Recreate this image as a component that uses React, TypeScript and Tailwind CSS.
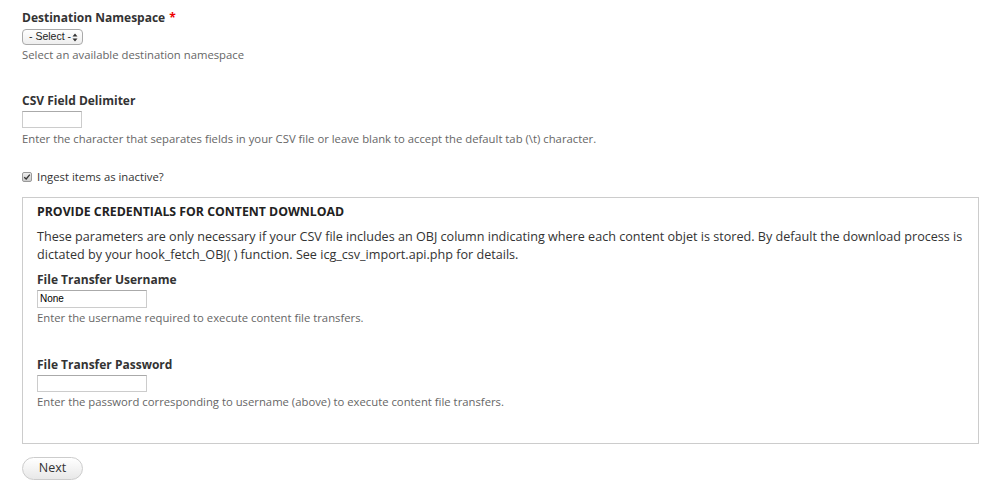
import React from "react";

const font = "font-['Open_Sans','Lucida_Grande',sans-serif]";

function Label({ children, required }: { children: React.ReactNode; required?: boolean }) {
  return (
    <div className="text-[12px] font-bold leading-[16px] text-[#333]">
      {children}
      {required && <span className="ml-1 text-[#e00]">*</span>}
    </div>
  );
}

function Help({ children }: { children: React.ReactNode }) {
  return <div className="text-[11.3px] leading-[14px] text-[#666]">{children}</div>;
}

export default function App() {
  return (
    <div className={`${font} bg-white w-[1000px] h-[495px] px-[22px] pt-[10px] text-[#333]`}>
      {/* destination namespace */}
      <div>
        <Label required>Destination Namespace</Label>
        <div className="mt-[3px] flex h-[16px] w-[61px] items-center justify-between rounded-[4px] border border-[#aaa] bg-gradient-to-b from-white to-[#eee] pl-[6px] pr-[4px] text-[10.5px] text-[#222] font-['Liberation_Sans',sans-serif]">
          <span>- Select -</span>
          <svg viewBox="0 0 6 9" className="h-[9px] w-[6px]">
            <path d="M0.5 3.6 L3 0.6 L5.5 3.6 Z M0.5 5.4 L3 8.4 L5.5 5.4 Z" fill="#333" />
          </svg>
        </div>
        <div className="mt-[3px]">
          <Help>Select an available destination namespace</Help>
        </div>
      </div>

      {/* csv delimiter */}
      <div className="mt-[31px]">
        <Label>CSV Field Delimiter</Label>
        <div className="mt-[2px] h-[17px] w-[60px] border border-[#ccc] border-t-[#aaa] bg-white" />
        <div className="mt-[4px]">
          <Help>Enter the character that separates fields in your CSV file or leave blank to accept the default tab (\t) character.</Help>
        </div>
      </div>

      {/* inactive checkbox */}
      <label className="mt-[23px] flex items-center gap-[5px] text-[11.3px] text-[#333]">
        <span className="flex h-[10px] w-[10px] items-center justify-center rounded-[2px] border border-[#999] bg-gradient-to-b from-[#eee] to-[#ccc]">
          <svg viewBox="0 0 10 10" className="h-[8px] w-[8px]">
            <path d="M1.5 5.2 L4 7.5 L8.5 2" fill="none" stroke="#333" strokeWidth="1.6" />
          </svg>
        </span>
        Ingest items as inactive?
      </label>

      {/* credentials fieldset */}
      <div className="mt-[11px] h-[247px] w-[957px] border border-[#ccc] px-[14px] pt-[6px]">
        <div className="text-[12.3px] font-bold leading-[16px] text-[#222]">PROVIDE CREDENTIALS FOR CONTENT DOWNLOAD</div>
        <p className="mt-[8px] text-[12.6px] leading-[18px] text-[#333]">
          These parameters are only necessary if your CSV file includes an OBJ column indicating where each content objet is stored. By default the download process is dictated by your hook_fetch_OBJ( ) function. See icg_csv_import.api.php for details.
        </p>

        <div className="mt-[8px]">
          <Label>File Transfer Username</Label>
          <div className="mt-[2px] flex h-[18px] w-[110px] items-center border border-[#ccc] border-t-[#aaa] bg-white px-[2px] text-[10px] text-[#000] font-['Liberation_Sans',sans-serif]">
            None
          </div>
          <div className="mt-[3px]">
            <Help>Enter the username required to execute content file transfers.</Help>
          </div>
        </div>

        <div className="mt-[32px]">
          <Label>File Transfer Password</Label>
          <div className="mt-[2px] h-[17px] w-[110px] border border-[#ccc] border-t-[#aaa] bg-white" />
          <div className="mt-[3px]">
            <Help>Enter the password corresponding to username (above) to execute content file transfers.</Help>
          </div>
        </div>
      </div>

      <button className="mt-[13px] h-[23px] w-[61px] rounded-full border border-[#ccc] bg-gradient-to-b from-white to-[#e8e8e8] text-[12.5px] text-[#333]">
        Next
      </button>
    </div>
  );
}
